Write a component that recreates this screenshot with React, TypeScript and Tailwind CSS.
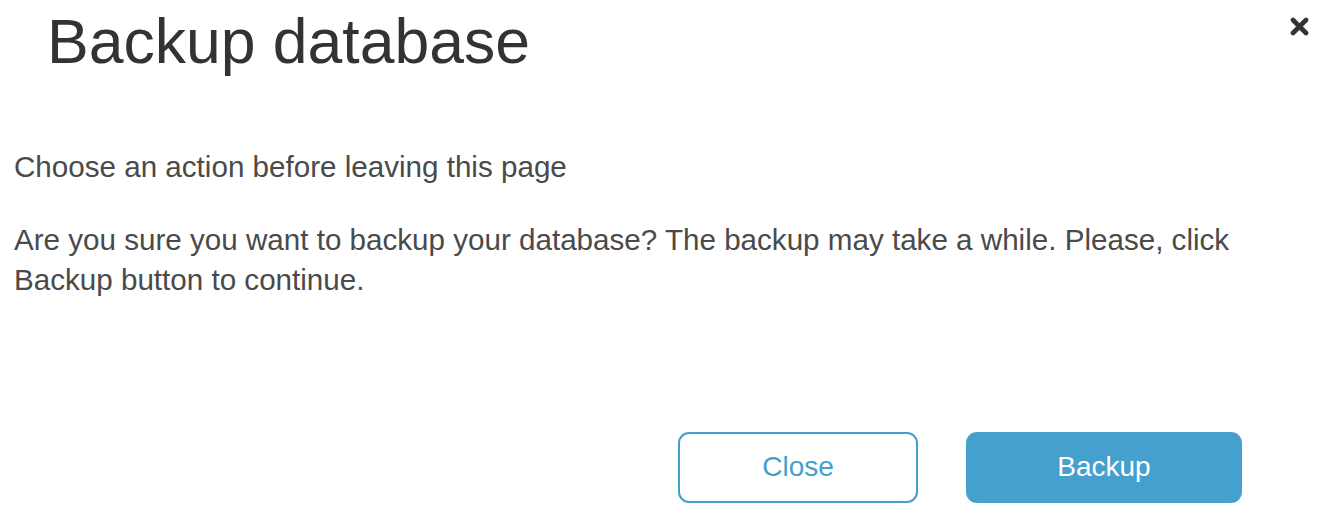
export default function App() {
  return (
    <div className="w-[1320px] h-[522px] bg-white overflow-hidden" style={{ fontFamily: '"Liberation Sans", Arial, sans-serif' }}>
      <div className="flex justify-between items-start">
        <h1 className="mt-[10px] ml-[47px] text-[62.5px] leading-none text-[#333333] font-normal">Backup database</h1>
        <button className="mt-[17px] mr-[11px] w-[19px] h-[19px] flex items-center justify-center text-[#333333]" aria-label="Close">
          <svg width="19" height="19" viewBox="0 0 19 19">
            <path d="M3 3 L16 16 M16 3 L3 16" stroke="#333333" strokeWidth="4.6" strokeLinecap="round" />
          </svg>
        </button>
      </div>
      <div className="px-[14px] text-[29.6px] leading-[40px] text-[#4a4a4a]">
        <p className="mt-[74px]">Choose an action before leaving this page</p>
        <p className="mt-[33px]">Are you sure you want to backup your database? The backup may take a while. Please, click Backup button to continue.</p>
      </div>
      <div className="flex justify-end gap-[48px] pr-[78px] mt-[132px]">
        <button className="w-[240px] h-[71px] rounded-[11px] border-2 border-[#459fcc] bg-white text-[#459fcc] text-[28px]">Close</button>
        <button className="w-[276px] h-[71px] rounded-[11px] bg-[#45a0cd] text-white text-[28px]">Backup</button>
      </div>
    </div>
  );
}
